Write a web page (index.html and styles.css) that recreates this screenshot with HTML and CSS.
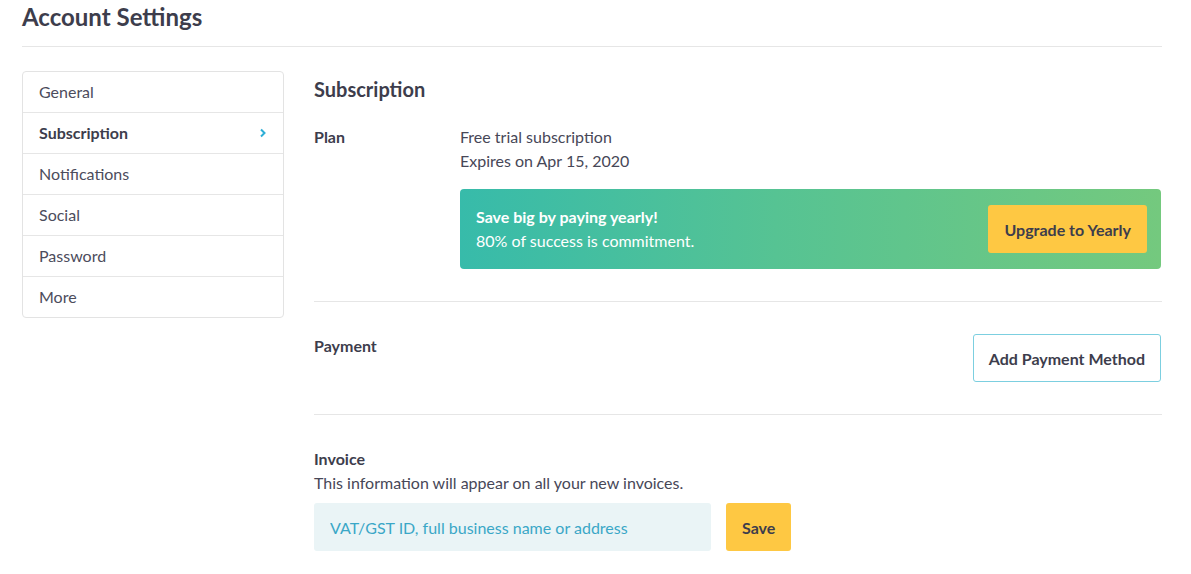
FILE: index.html
```html
<!DOCTYPE html>
<html lang="en">
<head>
<meta charset="utf-8">
<title>Account Settings</title>
<link rel="stylesheet" href="styles.css">
</head>
<body>
<div class="page">
  <h1 class="title">Account Settings</h1>
  <div class="layout">
    <nav class="sidebar">
      <a class="nav-item">General</a>
      <a class="nav-item active">Subscription
        <svg class="chev" width="8" height="12" viewBox="0 0 8 12"><path d="M2 2.5 L5.5 6 L2 9.5" fill="none" stroke="#2eaed6" stroke-width="2"/></svg>
      </a>
      <a class="nav-item">Notifications</a>
      <a class="nav-item">Social</a>
      <a class="nav-item">Password</a>
      <a class="nav-item">More</a>
    </nav>
    <main class="main">
      <section class="section first">
        <h2 class="heading">Subscription</h2>
        <div class="row">
          <div class="label">Plan</div>
          <div class="value">
            <p class="line">Free trial subscription</p>
            <p class="line">Expires on Apr 15, 2020</p>
            <div class="banner">
              <div class="banner-text">
                <p class="banner-title">Save big by paying yearly!</p>
                <p class="line">80% of success is commitment.</p>
              </div>
              <button class="btn btn-yellow">Upgrade to Yearly</button>
            </div>
          </div>
        </div>
      </section>
      <section class="section payment">
        <div class="label">Payment</div>
        <button class="btn btn-outline">Add Payment Method</button>
      </section>
      <section class="section">
        <div class="label">Invoice</div>
        <p class="line">This information will appear on all your new invoices.</p>
        <div class="invoice-form">
          <input class="input" type="text" placeholder="VAT/GST ID, full business name or address">
          <button class="btn btn-yellow">Save</button>
        </div>
      </section>
    </main>
  </div>
</div>
</body>
</html>
```

FILE: styles.css
```css
* { box-sizing: border-box; }
html, body { margin: 0; padding: 0; background: #fff; }
body {
  font-family: Lato, "Open Sans", "Liberation Sans", sans-serif;
  font-size: 16px;
  color: #474757;
}
.page {
  width: 1140px;
  margin-left: 22px;
}
.title {
  margin: 0;
  font-size: 24px;
  font-weight: 700;
  line-height: 34px;
  color: #3d3d4c;
  padding-bottom: 12px;
  border-bottom: 1px solid #e6e6e6;
}
.layout {
  display: flex;
  gap: 30px;
  margin-top: 24px;
  align-items: flex-start;
}
.sidebar {
  width: 262px;
  flex: none;
  border: 1px solid #e3e3e3;
  border-radius: 4px;
  display: flex;
  flex-direction: column;
}
.nav-item {
  display: flex;
  align-items: center;
  justify-content: space-between;
  height: 41px;
  padding: 0 16px;
  border-top: 1px solid #e6e6e6;
  color: #4c4c5c;
  line-height: 20px;
}
.nav-item:first-child { border-top: none; height: 40px; }
.nav-item.active { font-weight: 700; color: #3d3d4c; }
.main {
  flex: 1;
  min-width: 0;
}
.section {
  padding: 32px 0;
  border-top: 1px solid #e6e6e6;
}
.section.first {
  border-top: none;
  padding-top: 4px;
}
.heading {
  margin: 0 0 22px;
  font-size: 20px;
  line-height: 28px;
  font-weight: 700;
  color: #3d3d4c;
}
.row {
  display: flex;
}
.label {
  width: 146px;
  flex: none;
  font-weight: 700;
  line-height: 24px;
  color: #3d3d4c;
}
.value { flex: 1; }
.line {
  margin: 0;
  line-height: 24px;
}
.banner {
  margin-top: 16px;
  display: flex;
  align-items: center;
  justify-content: space-between;
  padding: 16px 14px 16px 16px;
  margin-right: 1px;
  border-radius: 4px;
  background: linear-gradient(90deg, #37bbaa 0%, #56c393 45%, #74c97e 100%);
  color: #fff;
}
.banner-title {
  margin: 0;
  font-weight: 700;
  line-height: 24px;
}
.btn {
  font-family: inherit;
  font-size: 16px;
  font-weight: 700;
  height: 48px;
  padding: 0 16px;
  border-radius: 3px;
  border: none;
  color: #3d3d4c;
  cursor: pointer;
}
.btn-yellow { background: #fec843; }
.btn-outline {
  background: #fff;
  border: 1px solid #7ccfe0;
  padding: 0 15px;
  margin-right: 1px;
}
.payment {
  display: flex;
  justify-content: space-between;
  align-items: flex-start;
}
.invoice-form {
  display: flex;
  gap: 15px;
  margin-top: 8px;
}
.input {
  width: 397px;
  height: 48px;
  border: none;
  border-radius: 3px;
  background: #eaf4f6;
  padding: 0 16px;
  font-family: inherit;
  font-size: 16px;
  color: #3d3d4c;
  outline: none;
}
.input::placeholder { color: #3aa7c7; opacity: 1; }
```
